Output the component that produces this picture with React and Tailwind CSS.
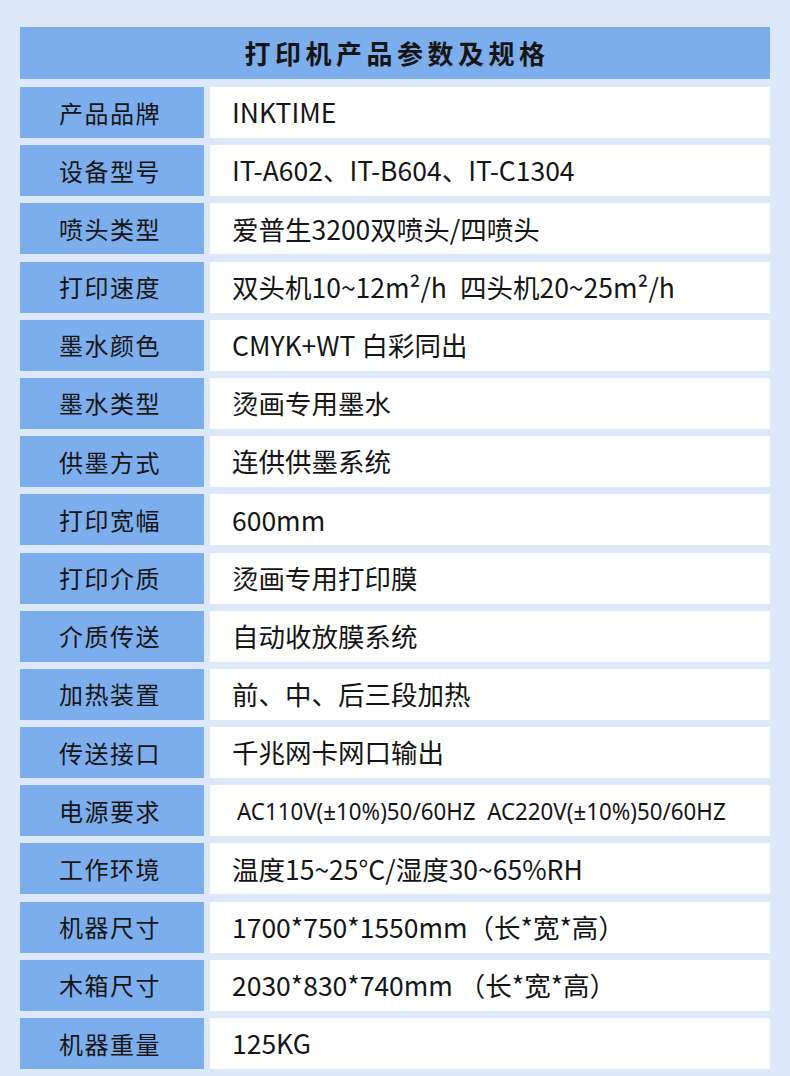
import React from "react";

const rows = [
  ["产品品牌", "INKTIME"],
  ["设备型号", "IT-A602、IT-B604、IT-C1304"],
  ["喷头类型", "爱普生3200双喷头/四喷头"],
  ["打印速度", <>双头机10~12m²/h<span className="inline-block w-[13px]" />四头机20~25m²/h</>],
  ["墨水颜色", "CMYK+WT 白彩同出"],
  ["墨水类型", "烫画专用墨水"],
  ["供墨方式", "连供供墨系统"],
  ["打印宽幅", "600mm"],
  ["打印介质", "烫画专用打印膜"],
  ["介质传送", "自动收放膜系统"],
  ["加热装置", "前、中、后三段加热"],
  ["传送接口", "千兆网卡网口输出"],
  ["电源要求", "AC110V(±10%)50/60HZ  AC220V(±10%)50/60HZ", true],
  ["工作环境", "温度15~25°C/湿度30~65%RH"],
  ["机器尺寸", "1700*750*1550mm（长*宽*高）"],
  ["木箱尺寸", "2030*830*740mm （长*宽*高）"],
  ["机器重量", "125KG"],
];

const font = { fontFamily: '"Noto Sans CJK SC", "Noto Sans", sans-serif' };
const narrowFont = { fontFamily: '"Noto Sans", "Noto Sans CJK SC", sans-serif' };

export default function App() {
  return (
    <div
      className="w-[790px] h-[1076px] bg-[#dde8fb] pt-[27px] px-[20px] text-[#151515] overflow-hidden"
      style={font}
    >
      <div className="h-[52px] bg-[#7caeed] flex items-center justify-center text-[26px] font-bold tracking-[4.5px] leading-none pl-[4px]">
        打印机产品参数及规格
      </div>
      <div className="mt-[8px] flex flex-col gap-[7.2px]">
        {rows.map(([k, v, narrow], i) => (
          <div key={i} className="flex h-[51px] gap-[6px]">
            <div className="w-[184px] bg-[#7caeed] flex items-center justify-center text-[24px] tracking-[1.5px] leading-none pr-[4px]">
              {k}
            </div>
            <div
              className={
                "flex-1 bg-white flex items-center leading-none whitespace-pre " +
                (narrow ? "pl-[27px]" : "pl-[22px]")
              }
            >
              {narrow ? (
                <span
                  className="text-[24px] inline-block scale-x-[0.93] origin-left"
                  style={narrowFont}
                >
                  {v}
                </span>
              ) : (
                <span className="text-[26.5px]">{v}</span>
              )}
            </div>
          </div>
        ))}
      </div>
    </div>
  );
}
